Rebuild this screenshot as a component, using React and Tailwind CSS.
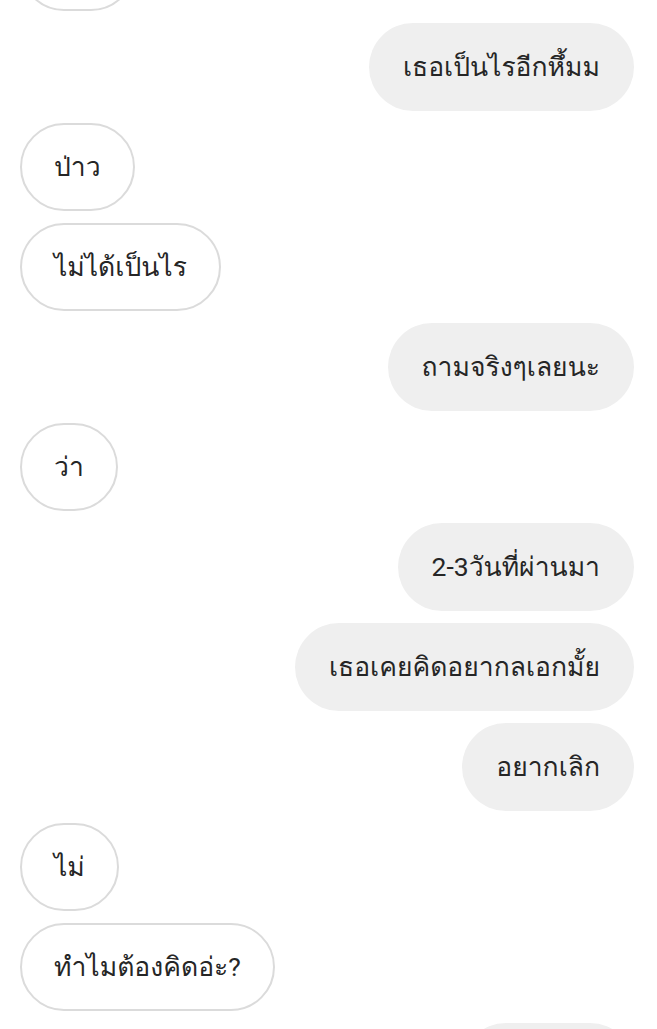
import React from "react";

const messages = [
  { side: "left", text: "ป่าว" },
  { side: "right", text: "เธอเป็นไรอีกหึ้มม" },
  { side: "left", text: "ป่าว" },
  { side: "left", text: "ไม่ได้เป็นไร" },
  { side: "right", text: "ถามจริงๆเลยนะ" },
  { side: "left", text: "ว่า" },
  { side: "right", text: "2-3วันที่ผ่านมา" },
  { side: "right", text: "เธอเคยคิดอยากลเอกมั้ย" },
  { side: "right", text: "อยากเลิก" },
  { side: "left", text: "ไม่" },
  { side: "left", text: "ทำไมต้องคิดอ่ะ?" },
  { side: "right", text: "อยากเลิก" },
];

export default function App() {
  return (
    <div className="w-[657px] h-[1029px] overflow-hidden bg-white font-['Roboto','Loma',sans-serif]">
      <div className="flex flex-col gap-[12px] pl-[20px] pr-[23px] -mt-[77px]">
        {messages.map((m, i) => (
          <div
            key={i}
            className={m.side === "left" ? "flex justify-start" : "flex justify-end"}
          >
            <div
              className={
                m.side === "left"
                  ? "h-[88px] flex items-center px-[32px] rounded-full border-2 border-[#dbdbdb] bg-white text-[#262626] text-[26.5px] whitespace-nowrap"
                  : "h-[88px] flex items-center px-[34px] rounded-full bg-[#efefef] text-[#262626] text-[26.5px] whitespace-nowrap"
              }
            >
              {m.text}
            </div>
          </div>
        ))}
      </div>
    </div>
  );
}
